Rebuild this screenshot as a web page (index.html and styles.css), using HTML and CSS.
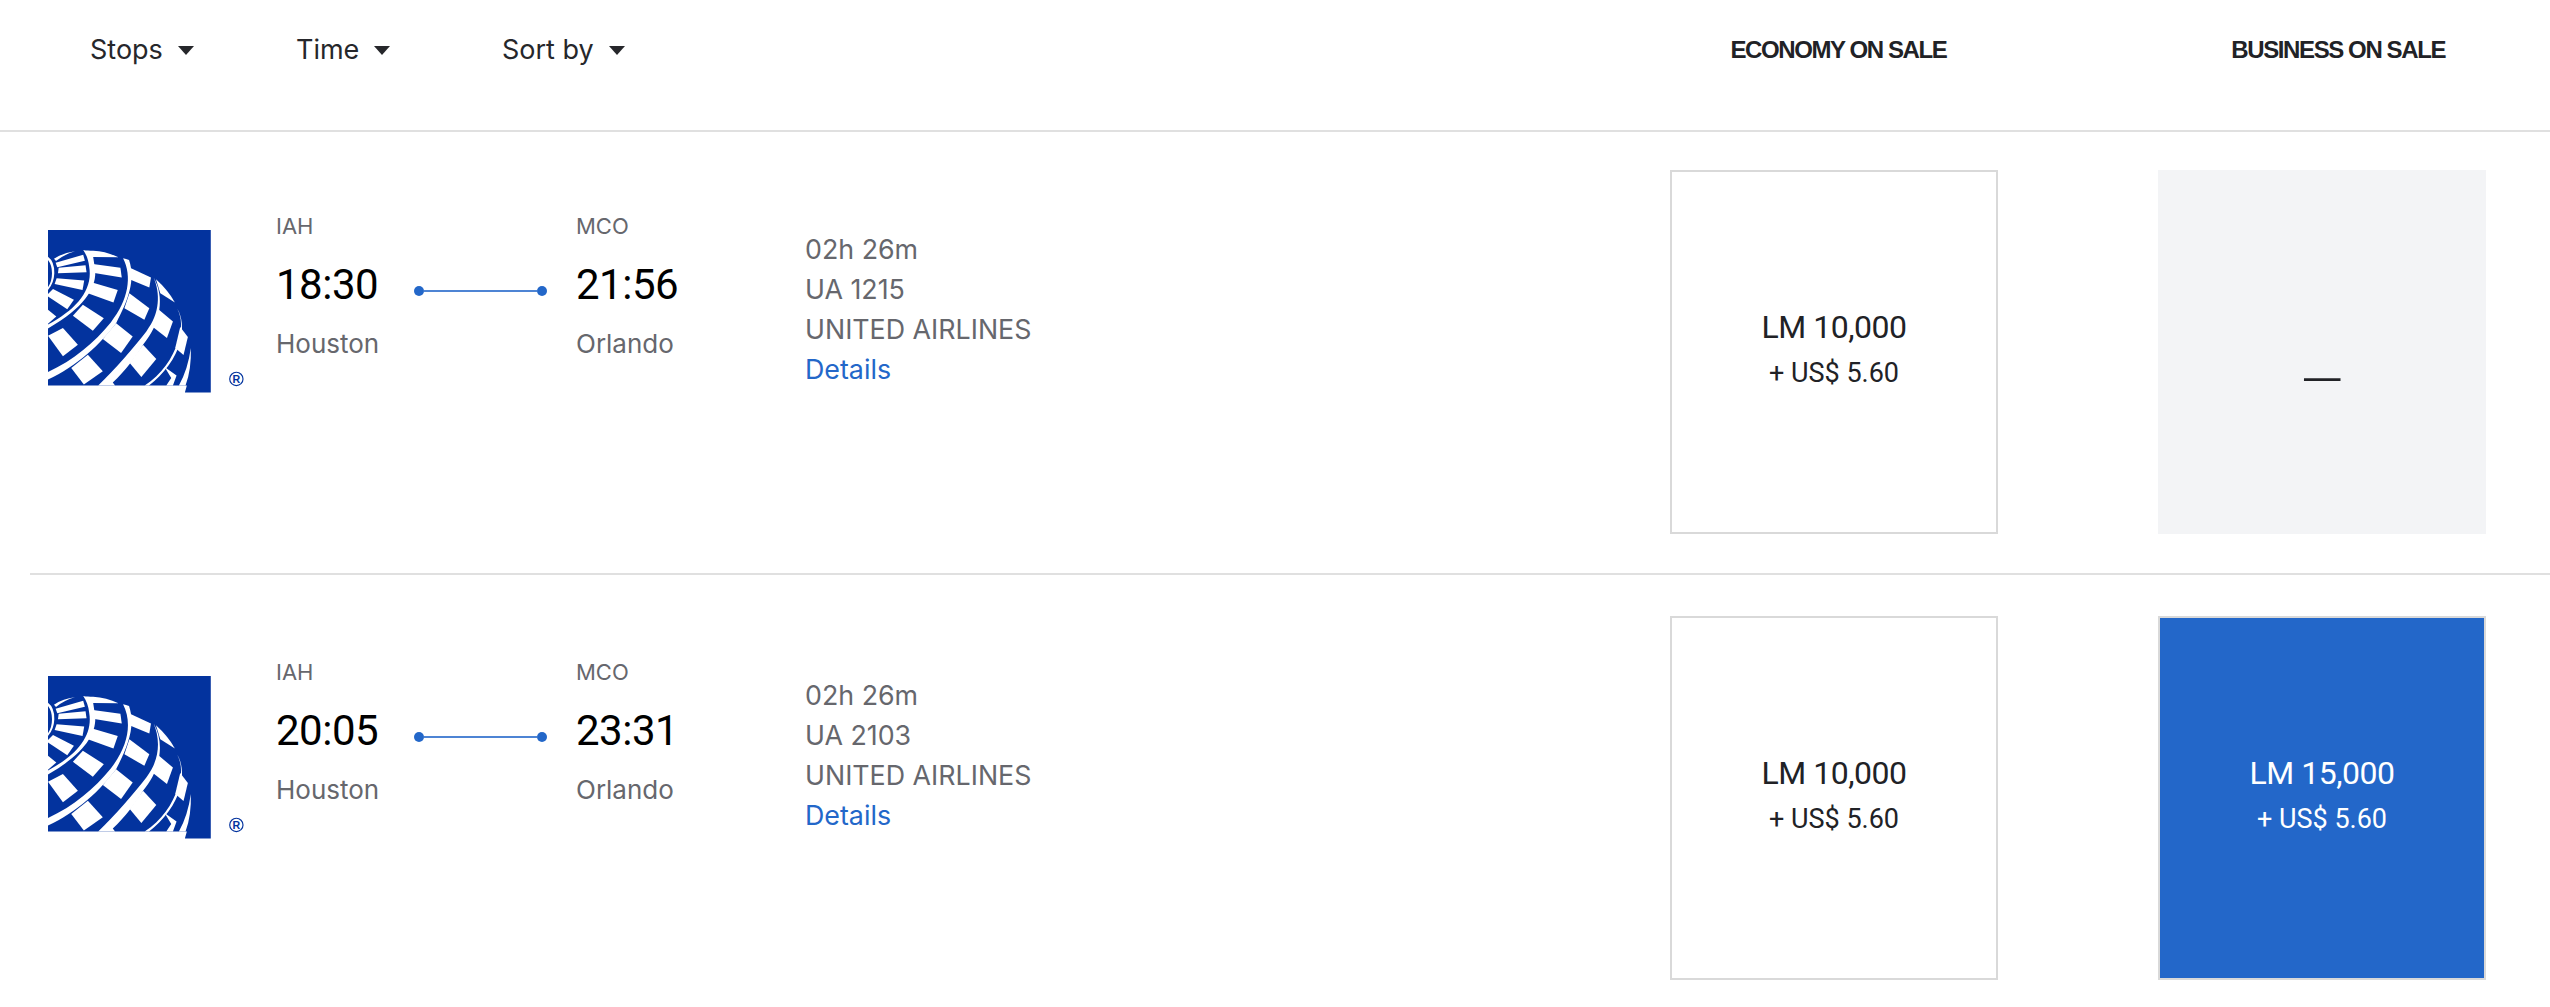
FILE: index.html
```html
<!DOCTYPE html>
<html lang="en">
<head>
<meta charset="utf-8">
<title>Flights</title>
<link rel="stylesheet" href="styles.css">
</head>
<body>
<svg class="defs" width="0" height="0" aria-hidden="true">
  <defs>
    <symbol id="ua-logo" viewBox="54 60 590 490">
      <path class="logo-blue" d="M54 60H544V549H466L472 528H54Z"/>
      <g class="logo-white">
        <path d="M54 140Q74 155 73 190Q72 220 54 240V232Q66 215 66 190Q66 165 54 150Z"/>
        <path d="M72 146Q100 128 135 124Q105 132 78 153Z"/>
        <path d="M77 158L160 134L165 152L82 172Z"/>
        <path d="M86 173L167 166L170 187L84 190Z"/>
        <path d="M80 205L163 212L158 240L74 222Z"/>
        <path d="M69 237L132 270L112 298L54 260V252Z"/>
        <path d="M54 300L79 320L54 342Z"/>
        <path d="M160 120C170 122 178 122 190 122Q230 124 266 142L190 141L196 180C200 230 170 290 54 356V344C140 298 190 240 178 170C176 150 170 135 160 120Z"/>
        <path d="M189 162L272 173L276 203L189 188Z"/>
        <path d="M187 218L264 240L251 278L174 250Z"/>
        <path d="M159 285L222 325L189 363L129 318Z"/>
        <path d="M54 378L99 355L144 405L99 440Z"/>
        <path d="M124 475L174 435L219 485L162 525Z"/>
        <path d="M280 145C286 146 292 148 298 150C318 210 296 270 259 340C215 400 140 470 54 510V487C130 452 195 398 243 338C296 270 308 200 280 145Z"/>
        <path d="M304 175L364 203L359 233L299 208Z"/>
        <path d="M299 250L359 295L344 330L284 295Z"/>
        <path d="M219 388L259 340L309 380L274 430Z"/>
        <path d="M372 203C392 250 392 310 350 365C315 410 255 480 205 528H256L249 519C285 485 320 440 340 405C395 340 405 260 372 203Z"/>
        <path d="M300 460L340 405L380 448L335 502Z"/>
        <path d="M379 208Q415 240 436 278L392 250Z"/>
        <path d="M388 300L430 335L412 385L365 348Z"/>
        <path d="M443 297C458 325 458 360 445 395C430 445 395 495 345 528H358C400 495 440 445 452 395C462 360 458 320 443 297Z"/>
        <path d="M452 352L475 382L462 436L437 415Z"/>
        <path d="M405 472L425 505L410 528H430L441 498Z"/>
        <path d="M448 528Q475 480 484 415Q486 480 468 528Z"/>
      </g>
      <circle class="logo-mark" cx="621" cy="508" r="20"/>
      <text class="logo-r" x="621" y="520">R</text>
    </symbol>
  </defs>
</svg>
<main class="page">
  <header class="toolbar">
    <nav class="filters">
      <button class="filter">Stops<span class="caret"></span></button>
      <button class="filter">Time<span class="caret"></span></button>
      <button class="filter">Sort by<span class="caret"></span></button>
    </nav>
    <div class="cabin-heads">
      <h2 class="cabin-head cabin-economy">ECONOMY ON SALE</h2>
      <h2 class="cabin-head cabin-business">BUSINESS ON SALE</h2>
    </div>
  </header>

  <section class="rows">
    <article class="flight">
      <svg class="logo" role="img" aria-label="United Airlines"><use href="#ua-logo"/></svg>
      <div class="route">
        <div class="stop">
          <div class="code">IAH</div>
          <div class="clock">18:30</div>
          <div class="city">Houston</div>
        </div>
        <div class="track"><i class="dot"></i><i class="wire"></i><i class="dot"></i></div>
        <div class="stop stop-end">
          <div class="code">MCO</div>
          <div class="clock">21:56</div>
          <div class="city">Orlando</div>
        </div>
      </div>
      <div class="meta">
        <div>02h 26m</div>
        <div>UA 1215</div>
        <div>UNITED AIRLINES</div>
        <a class="details" href="#">Details</a>
      </div>
      <div class="fares">
        <div class="fare"><div class="miles">LM 10,000</div><div class="cash">+ US$ 5.60</div></div>
        <div class="fare fare-none"><span class="none-dash">—</span></div>
      </div>
    </article>

    <article class="flight">
      <svg class="logo" role="img" aria-label="United Airlines"><use href="#ua-logo"/></svg>
      <div class="route">
        <div class="stop">
          <div class="code">IAH</div>
          <div class="clock">20:05</div>
          <div class="city">Houston</div>
        </div>
        <div class="track"><i class="dot"></i><i class="wire"></i><i class="dot"></i></div>
        <div class="stop stop-end">
          <div class="code">MCO</div>
          <div class="clock">23:31</div>
          <div class="city">Orlando</div>
        </div>
      </div>
      <div class="meta">
        <div>02h 26m</div>
        <div>UA 2103</div>
        <div>UNITED AIRLINES</div>
        <a class="details" href="#">Details</a>
      </div>
      <div class="fares">
        <div class="fare"><div class="miles">LM 10,000</div><div class="cash">+ US$ 5.60</div></div>
        <div class="fare fare-selected"><div class="miles">LM 15,000</div><div class="cash">+ US$ 5.60</div></div>
      </div>
    </article>
  </section>
</main>
</body>
</html>
```
FILE: styles.css
```css
* { box-sizing: border-box; }
html, body { margin: 0; padding: 0; background: #fff; }
body { font-family: Inter, "Liberation Sans", sans-serif; color: #212226; overflow: hidden; }
.defs { position: absolute; }

.toolbar {
  height: 132px;
  border-bottom: 2px solid #e0e0e0;
  display: flex;
  justify-content: space-between;
  padding: 0 105px 0 90px;
}
.filters { display: flex; align-items: flex-start; padding-top: 32px; }
.filter {
  border: 0; background: none; padding: 0;
  font: 400 27px/36px Inter, sans-serif;
  color: #26272b;
  display: flex; align-items: center;
  width: 206px;
}
.caret {
  width: 0; height: 0; margin-left: 15px;
  border-left: 8px solid transparent;
  border-right: 8px solid transparent;
  border-top: 9px solid #26272b;
}
.cabin-heads { display: flex; padding-top: 36px; }
.cabin-head {
  margin: 0;
  font: 700 24px/28px "Liberation Sans", sans-serif;
  letter-spacing: -1.4px;
  color: #212226;
  white-space: nowrap;
}
.cabin-business { margin-left: 285px; }

.flight {
  height: 443px;
  margin-left: 30px;
  display: flex;
  align-items: flex-start;
  border-bottom: 2px solid #e0e0e0;
  padding-top: 38px;
  position: relative;
}
.flight:last-child { border-bottom: 0; }
.flight + .flight { padding-top: 41px; }
.logo { width: 196px; height: 163px; margin: 60px 0 0 18px; flex: none; }
.logo-blue { fill: #03339e; }
.logo-white { fill: #fff; }
.logo-mark { fill: none; stroke: #03339e; stroke-width: 3.5; }
.logo-r { font: 700 32px "Liberation Sans", sans-serif; fill: #03339e; text-anchor: middle; }

.route { display: flex; margin-left: 32px; width: 415px; flex: none; }
.stop { width: 132px; margin-top: 41px; flex: none; }
.stop-end { width: 115px; }
.code { font: 400 22px/30px Inter, sans-serif; color: #66676d; }
.clock { font: 400 42px/56px Roboto, sans-serif; color: #000; margin-top: 16px; letter-spacing: -0.5px; }
.city { font: 400 26px/36px Inter, sans-serif; color: #66676d; margin-top: 13px; }
.track { width: 168px; display: flex; align-items: center; height: 10px; margin-top: 116px; padding: 0 29px 0 6px; flex: none; }
.dot { width: 10px; height: 10px; border-radius: 50%; background: #2367c9; flex: none; }
.wire { flex: 1; height: 2px; background: #4d84d4; }

.meta { margin-left: 114px; padding-top: 59px; font: 400 26.8px/40px Inter, sans-serif; color: #66676d; flex: none; }
.details { color: #2367c9; text-decoration: none; display: block; }

.fares { display: flex; gap: 160px; position: absolute; left: 1640px; }
.fare {
  width: 328px; height: 364px;
  border: 2px solid #d9d9d9;
  display: flex; flex-direction: column; align-items: center; justify-content: center;
  padding-bottom: 8px;
}
.miles { font: 400 32px/44px Roboto, sans-serif; letter-spacing: -0.5px; color: #212226; }
.cash { font: 400 27px/38px Roboto, sans-serif; letter-spacing: 0; color: #212226; margin-top: 5px; }
.fare-none { background: #f3f4f6; border-color: #f3f4f6; padding-bottom: 0; }
.none-dash { font: 300 56px/44px Roboto, sans-serif; margin-top: 58px; }
.fare-selected { background: #2367c9; }
.fare-selected .miles, .fare-selected .cash { color: #fff; }
```
